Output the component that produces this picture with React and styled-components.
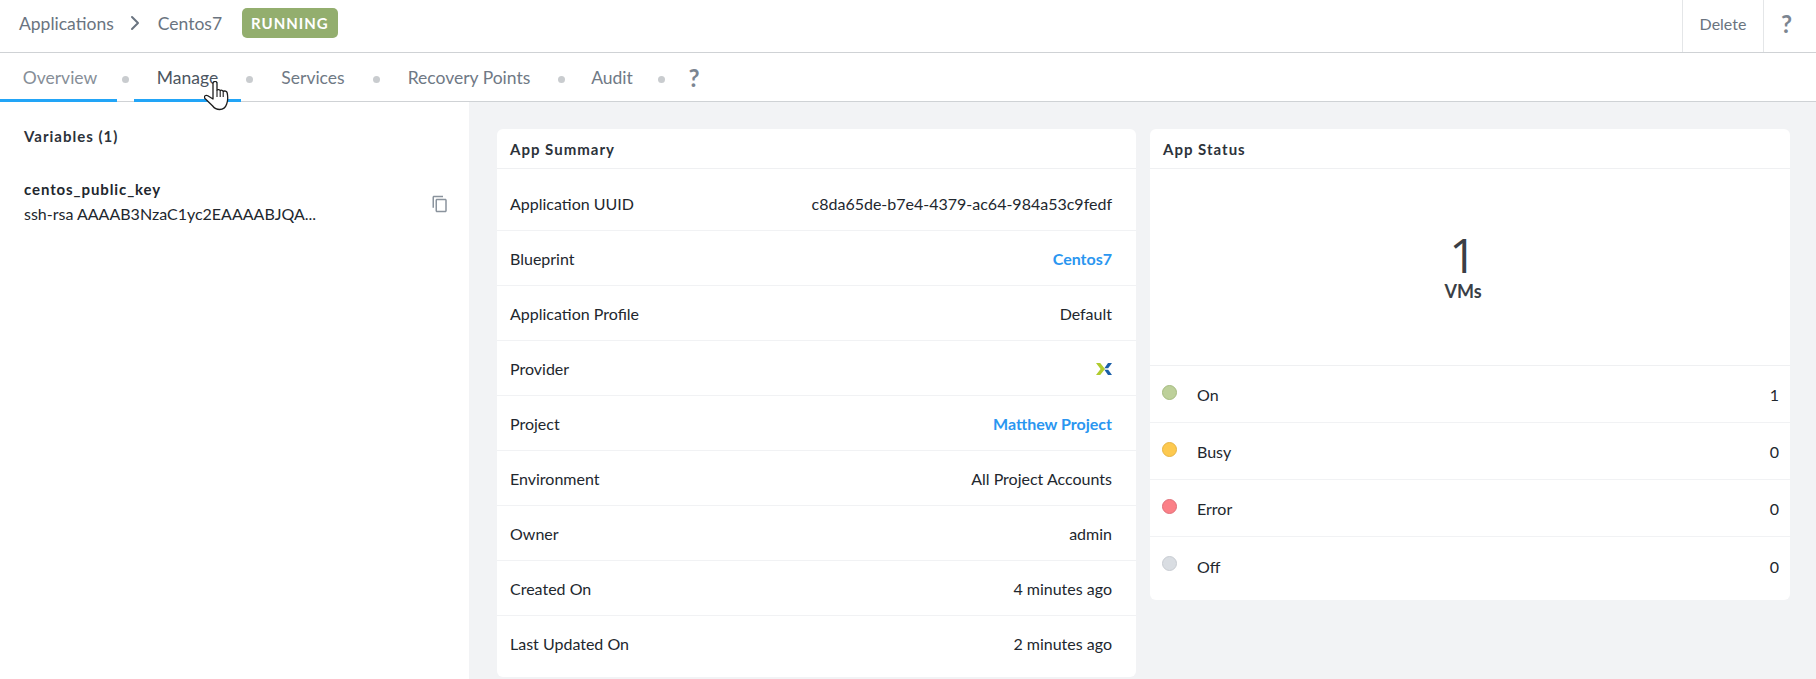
import React from 'react';
import styled, { createGlobalStyle } from 'styled-components';
import { LuChevronRight } from 'react-icons/lu';
import { MdOutlineContentCopy } from 'react-icons/md';

const GlobalStyle = createGlobalStyle`
  html, body {
    margin: 0;
    height: 100%;
    overflow: hidden;
    background: #fff;
    font-family: Lato, "Open Sans", sans-serif;
    color: #22272e;
  }
`;

const Page = styled.div`
  display: flex;
  flex-direction: column;
  height: 679px;
  overflow: hidden;
`;

const TopBar = styled.header`
  display: flex;
  align-items: stretch;
  justify-content: space-between;
  height: 52px;
  flex: none;
  border-bottom: 1px solid #cfd2d5;
  box-sizing: content-box;
`;

const Crumbs = styled.div`
  display: flex;
  align-items: center;
  padding: 0 0 6px 19px;
  font-size: 17.5px;
  color: #6a7480;
`;

const Chevron = styled(LuChevronRight)`
  margin: 0 11px 0 9px;
  color: #6a7480;
  font-size: 24px;
`;

const Badge = styled.span`
  margin-left: 20px;
  padding: 0 9px;
  height: 30px;
  line-height: 30px;
  border-radius: 5px;
  background: #93ae6e;
  color: #fff;
  font-size: 15px;
  font-weight: 700;
  letter-spacing: 1px;
`;

const TopActions = styled.div`
  display: flex;
`;

const TopAction = styled.div`
  display: flex;
  align-items: center;
  justify-content: center;
  width: ${(p) => p.$width}px;
  padding: 0 ${(p) => p.$right || 0}px 6px 0;
  box-sizing: border-box;
  border-left: 1px solid #e4e6e8;
  font-size: 16px;
  color: #6a7480;
`;

const Help = styled.span`
  font-size: ${(p) => p.$size}px;
  font-weight: 700;
  color: #7b8591;
`;

const TabBar = styled.nav`
  position: relative;
  display: flex;
  align-items: stretch;
  height: 48px;
  flex: none;
  border-bottom: 1px solid #cfd2d5;
`;

const Tab = styled.div`
  display: flex;
  align-items: center;
  justify-content: center;
  width: ${(p) => p.$width}px;
  margin-left: ${(p) => p.$left || 0}px;
  margin-bottom: -1px;
  padding: 3px 0 0 ${(p) => p.$inset || 0}px;
  box-sizing: border-box;
  font-size: 17.5px;
  color: ${(p) => p.$color || '#6f7985'};
  border-bottom: ${(p) => (p.$line ? '3px solid #22a5f7' : '3px solid transparent')};
`;

const Dot = styled.span`
  align-self: center;
  width: 7px;
  height: 7px;
  margin: 5px 0 0 ${(p) => p.$left}px;
  border-radius: 50%;
  background: #c9cccf;
`;

const Cursor = styled.svg`
  position: absolute;
  left: 204px;
  top: 28px;
`;

const Body = styled.div`
  display: flex;
  flex: 1;
  min-height: 0;
`;

const Side = styled.aside`
  width: 469px;
  flex: none;
  padding: 25px 20px 0 24px;
  box-sizing: border-box;
`;

const SideTitle = styled.div`
  font-size: 15px;
  font-weight: 700;
  letter-spacing: 1px;
  color: #2c323a;
`;

const Variable = styled.div`
  display: flex;
  align-items: center;
  justify-content: space-between;
  margin-top: 35px;
`;

const VarName = styled.div`
  font-size: 15px;
  font-weight: 700;
  letter-spacing: 0.9px;
`;

const VarValue = styled.div`
  margin-top: 6px;
  font-size: 16px;
`;

const CopyIcon = styled(MdOutlineContentCopy)`
  color: #8a939d;
  font-size: 18px;
  margin-top: 5px;
`;

const Content = styled.main`
  display: flex;
  flex: 1;
  align-items: flex-start;
  gap: 14px;
  padding: 27px 26px 0 28px;
  background: #f2f3f5;
`;

const Card = styled.section`
  flex: ${(p) => (p.$wide ? '0 0 639px' : '1')};
  background: #fff;
  border-radius: 6px;
`;

const CardTitle = styled.div`
  display: flex;
  align-items: center;
  height: 39px;
  padding: 0 13px;
  font-size: 15px;
  font-weight: 700;
  letter-spacing: 1px;
  border-bottom: 1px solid #eff0f2;
  color: #2c323a;
`;

const Row = styled.div`
  display: flex;
  align-items: center;
  justify-content: space-between;
  height: 55px;
  padding: 0 24px 0 13px;
  box-sizing: border-box;
  font-size: 16px;
  border-bottom: 1px solid #f1f2f4;
  ${CardTitle} + & {
    height: 62px;
    padding-top: 7px;
  }
  &:last-child {
    height: 61px;
    padding-bottom: 6px;
    border-bottom: none;
  }
`;

const Link = styled.span`
  color: #2a96f0;
  font-weight: 700;
`;

const Counter = styled.div`
  display: flex;
  flex-direction: column;
  align-items: center;
  justify-content: center;
  height: 197px;
  padding: 0 14px 3px 0;
  box-sizing: border-box;
  border-bottom: 1px solid #eff0f2;
`;

const BigNumber = styled.div`
  font-family: "Open Sans", sans-serif;
  font-size: 48px;
  line-height: 50px;
  font-weight: 400;
  color: #3a3f46;
`;

const BigLabel = styled.div`
  font-size: 18px;
  font-weight: 700;
  color: #3a3f46;
`;

const StatusList = styled.div`
  padding-bottom: 6px;
`;

const StatusRow = styled.div`
  display: flex;
  align-items: center;
  height: 57px;
  padding: 1px 11px 0 12px;
  box-sizing: border-box;
  font-size: 16px;
  border-bottom: 1px solid #f1f2f4;
  &:last-child {
    border-bottom: none;
  }
`;

const StatusDot = styled.span`
  width: 15px;
  height: 15px;
  margin-top: -5px;
  border-radius: 50%;
  box-sizing: border-box;
  background: ${(p) => p.$color};
  border: 1px solid ${(p) => p.$edge};
`;

const StatusName = styled.span`
  margin-left: 20px;
  flex: 1;
`;

const NutanixLogo = () => (
  <svg width="16" height="12" viewBox="0 0 16 12">
    <path d="M0 0h4.200L9 6l-4.800 6H0l4.600-6z" fill="#b0cb2e" />
    <path d="M8.400 5.200L12 0h4l-3.800 5.200z" fill="#1a5ea8" />
    <path d="M8.400 6.800h3.800L16 12h-4z" fill="#1a5ea8" />
  </svg>
);

const HandCursor = () => (
  <Cursor width="26" height="31" viewBox="0 0 26 31">
    <path
      d="M9 2.500c0-2.800 4-2.800 4 0v6.500c1-.7 2.600-.5 3.200.5 1-.6 2.600-.3 3 .8 1.300-.6 3.600-.2 4 1.700.6 3 .6 8-.5 11-1 3-3.500 5.500-7 5.500-3.500 0-5.500-1.500-7-3.500L1 17.500c-1.600-2 .6-4 2.800-2.800L9 18z"
      fill="#fff"
      stroke="#1c1c1c"
      strokeWidth="1.300"
      strokeLinejoin="round"
    />
    <path d="M13 9v7M16.200 9.500V16M19.200 10.300V16" stroke="#1c1c1c" strokeWidth="1.100" fill="none" />
  </Cursor>
);

const summary = [
  ['Application UUID', 'c8da65de-b7e4-4379-ac64-984a53c9fedf'],
  ['Blueprint', <Link>Centos7</Link>],
  ['Application Profile', 'Default'],
  ['Provider', <NutanixLogo />],
  ['Project', <Link>Matthew Project</Link>],
  ['Environment', 'All Project Accounts'],
  ['Owner', 'admin'],
  ['Created On', '4 minutes ago'],
  ['Last Updated On', '2 minutes ago'],
];

const statuses = [
  { name: 'On', count: 1, color: '#bdd09a', edge: '#a5bb80' },
  { name: 'Busy', count: 0, color: '#fdc94f', edge: '#e6b444' },
  { name: 'Error', count: 0, color: '#fb8087', edge: '#e0707a' },
  { name: 'Off', count: 0, color: '#d9dde2', edge: '#c8ccd2' },
];

const App = () => (
  <Page>
    <GlobalStyle />
    <TopBar>
      <Crumbs>
        Applications
        <Chevron />
        Centos7
        <Badge>RUNNING</Badge>
      </Crumbs>
      <TopActions>
        <TopAction $width={81}>Delete</TopAction>
        <TopAction $width={53} $right={7}>
          <Help $size={24}>?</Help>
        </TopAction>
      </TopActions>
    </TopBar>
    <TabBar>
      <Tab $width={117} $inset={3} $color="#868e97" $line>Overview</Tab>
      <Dot $left={5} />
      <Tab $width={107} $left={5} $color="#4b5560" $line>Manage</Tab>
      <Dot $left={5} />
      <Tab $width={110} $left={5}>Services</Tab>
      <Dot $left={5} />
      <Tab $width={168} $left={5}>Recovery Points</Tab>
      <Dot $left={5} />
      <Tab $width={84} $left={5}>Audit</Tab>
      <Dot $left={4} />
      <Tab $width={30} $left={14}>
        <Help $size={24}>?</Help>
      </Tab>
      <HandCursor />
    </TabBar>
    <Body>
      <Side>
        <SideTitle>Variables (1)</SideTitle>
        <Variable>
          <div>
            <VarName>centos_public_key</VarName>
            <VarValue>ssh-rsa AAAAB3NzaC1yc2EAAAABJQA...</VarValue>
          </div>
          <CopyIcon />
        </Variable>
      </Side>
      <Content>
        <Card $wide>
          <CardTitle>App Summary</CardTitle>
          {summary.map(([label, value]) => (
            <Row key={label}>
              <span>{label}</span>
              <span>{value}</span>
            </Row>
          ))}
        </Card>
        <Card>
          <CardTitle>App Status</CardTitle>
          <Counter>
            <BigNumber>1</BigNumber>
            <BigLabel>VMs</BigLabel>
          </Counter>
          <StatusList>
            {statuses.map((s) => (
              <StatusRow key={s.name}>
                <StatusDot $color={s.color} $edge={s.edge} />
                <StatusName>{s.name}</StatusName>
                <span>{s.count}</span>
              </StatusRow>
            ))}
          </StatusList>
        </Card>
      </Content>
    </Body>
  </Page>
);

export default App;
